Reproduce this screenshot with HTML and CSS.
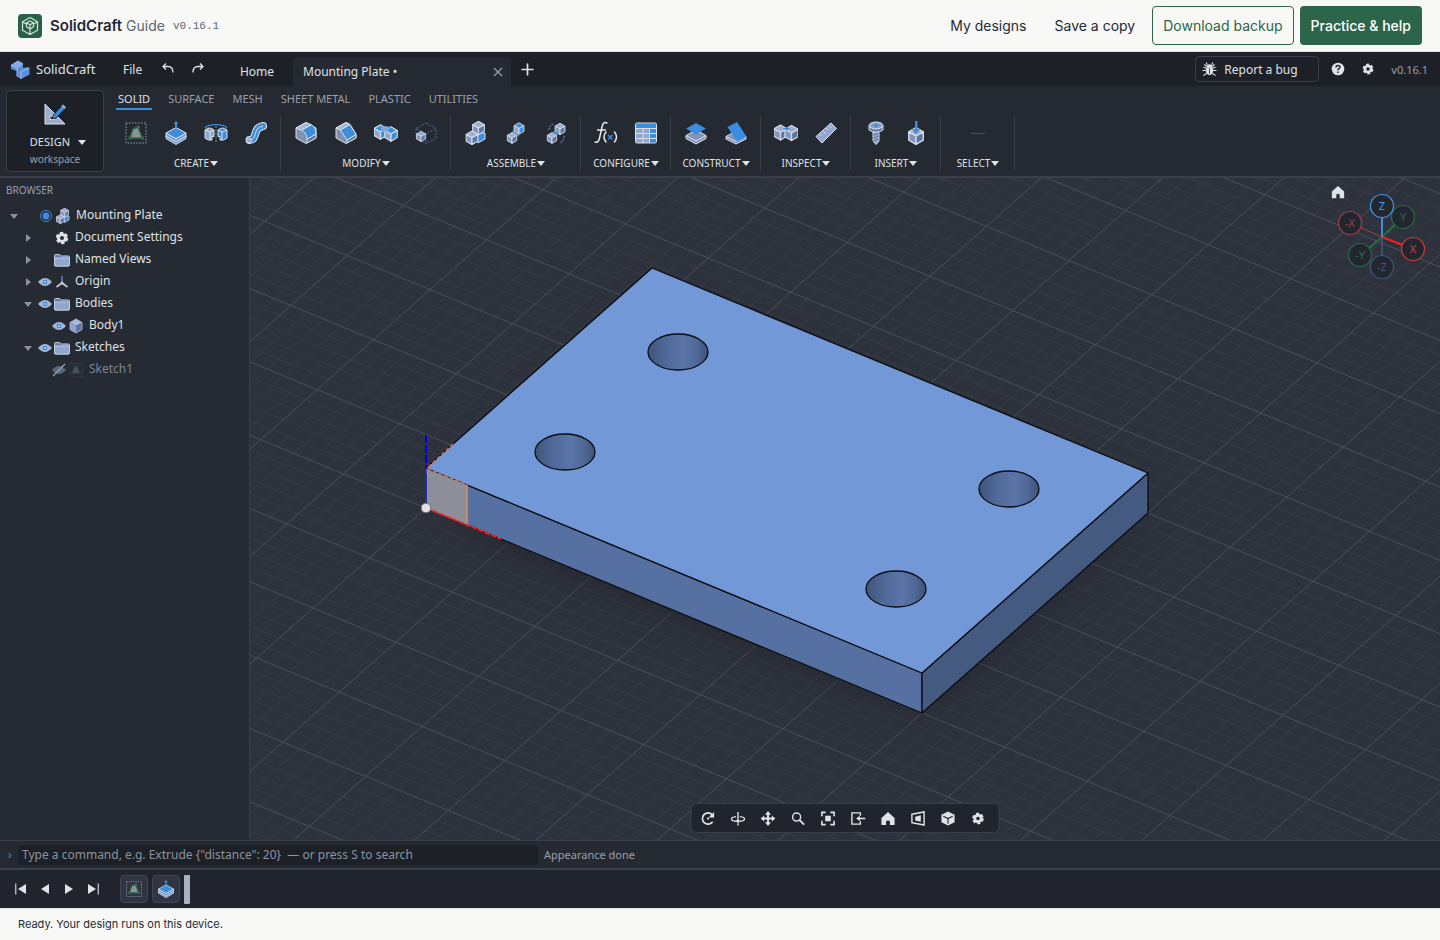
FILE: index.html
```html
<!DOCTYPE html>
<html lang="en">
<head>
<meta charset="utf-8">
<meta name="viewport" content="width=device-width, initial-scale=1">
<title>SolidCraft Guide</title>
<link rel="stylesheet" href="styles.css">
</head>
<body>
<svg class="sprite" aria-hidden="true">
  <defs>
    <g id="cube-grey" stroke="#d5dbe6" stroke-linejoin="round">
      <path d="M0-6 5.2-3 0 0-5.2-3Z" fill="#9dadcb"/><path d="M-5.2-3 0 0V6L-5.2 3Z" fill="#8095bf"/><path d="M5.2-3 0 0V6L5.2 3Z" fill="#5f76a5"/>
    </g>
    <g id="cube-blue" stroke="#d5dbe6" stroke-linejoin="round">
      <path d="M0-6 5.2-3 0 0-5.2-3Z" fill="#3b8ddd"/><path d="M-5.2-3 0 0V6L-5.2 3Z" fill="#8fa6cf"/><path d="M5.2-3 0 0V6L5.2 3Z" fill="#3b8ddd"/>
    </g>
    <symbol id="i-sketch" viewBox="0 0 24 24">
      <rect x="2" y="2" width="20" height="20" fill="none" stroke="#8fa0bd" stroke-dasharray="1.5 1.5"/>
      <path d="M6 17 9 8l5-2 4 11Z" fill="#8d9499" stroke="#2c6e49" stroke-width="1.4"/>
      <path d="M4.500 15.500h3v3h-3ZM17 15.500h3v3h-3ZM13 4.500h3v3h-3Z" fill="#2c6e49"/>
    </symbol>
    <symbol id="i-extrude" viewBox="0 0 24 24">
      <path d="M2 12v5.500l10 6 10-6V12L12 18Z" fill="#6f94cf" stroke="#dbe1ea"/>
      <path d="M12 6.500 22 12l-10 5.800L2 12Z" fill="#3b8ddd" stroke="#dbe1ea"/>
      <path d="M2 15l10 6 10-6" fill="none" stroke="#dbe1ea"/>
      <path d="M12 0l2.500 3h-1.500v4h-2V3H9.500Z" fill="#3b8ddd"/>
    </symbol>
    <symbol id="i-revolve" viewBox="0 0 24 24">
      <path d="M1 7c3-4.500 19-4.500 22 0" fill="none" stroke="#3b8ddd" stroke-width="1.300"/>
      <path d="M1 9q4.500-4 9 0v6.500H8V19q-4 1-7-2Z" fill="#8fa6cf" stroke="#dbe1ea"/>
      <path d="M23 9q-4.500-4-9 0v6.500h2V19q4 1 7-2Z" fill="#3b8ddd" stroke="#dbe1ea"/>
      <path d="M6 11v8M18 11v8M1 9l5 2 4-2M23 9l-5 2-4-2" stroke="#dbe1ea" fill="none"/>
      <path d="M12 5v17" stroke="#7e8ba3" stroke-dasharray="2 1.500"/>
    </symbol>
    <symbol id="i-sweep" viewBox="0 0 24 24">
      <path d="M5.500 19C14 19 8 7 19 5" fill="none" stroke="#dbe1ea" stroke-width="8" stroke-linecap="round"/>
      <path d="M5.500 19C14 19 8 7 19 5" fill="none" stroke="#3b8ddd" stroke-width="6" stroke-linecap="round"/>
      <path d="M5.500 19C14 19 8 7 19 5" fill="none" stroke="#dbe1ea"/>
      <ellipse cx="5" cy="19.500" rx="2.500" ry="2.300" fill="#8fa6cf" stroke="#dbe1ea"/>
    </symbol>
    <symbol id="i-fillet" viewBox="0 0 24 24">
      <path d="M12 1.500 22 7v10l-10 5.500L2 17V7Z" fill="#7f90b3" stroke="#dbe1ea"/>
      <path d="M12 1.500 17.500 3.800 7.500 9.200 2 7Z" fill="#a9b7d2" stroke="#dbe1ea"/>
      <path d="M13 22v-3.800l9-5.200v4Z" fill="#5e729c" stroke="#dbe1ea"/>
      <path d="M17.500 3.800q4.500 2.700 4.500 9.200L13 18.200q0-6-5.500-9Z" fill="#3b8ddd" stroke="#dbe1ea"/>
    </symbol>
    <symbol id="i-chamfer" viewBox="0 0 24 24">
      <path d="M12 1.500 16 3.500 22 13v4l-10 5.500L2 17V7Z" fill="#7f90b3" stroke="#dbe1ea"/>
      <path d="M12 1.500 16 3.500 6.500 9 2 7Z" fill="#a9b7d2" stroke="#dbe1ea"/>
      <path d="M13 22v-3l9-5.500V17Z" fill="#5e729c" stroke="#dbe1ea"/>
      <path d="M16 3.500 22 13.500 13 19 6.500 9Z" fill="#3b8ddd" stroke="#dbe1ea"/>
    </symbol>
    <symbol id="i-combine" viewBox="0 0 24 24">
      <use href="#cube-blue" transform="translate(6.500 11) scale(1.200)"/>
      <use href="#cube-blue" transform="translate(17 13) scale(1.200)"/>
      <path d="M7 4.500 17 6l-5 5-5-1Z" fill="#7fa6de"/>
    </symbol>
    <symbol id="i-shell" viewBox="0 0 24 24">
      <path d="M12 2 22 7.500v10L12 22.500 2 17.500v-10ZM2 7.500l10 5 10-5M12 12.500v10" fill="none" stroke="#4b659a" stroke-dasharray="2 1.200"/>
      <use href="#cube-grey" transform="translate(7 15.500) scale(.85)"/>
    </symbol>
    <symbol id="i-assemble" viewBox="0 0 24 24">
      <path d="M13 12h8v6l-7 4Z" fill="#3b8ddd" stroke="#dbe1ea"/>
      <use href="#cube-grey" transform="translate(14.500 7) scale(1.120)"/>
      <use href="#cube-grey" transform="translate(8 16.800) scale(1.120)"/>
    </symbol>
    <symbol id="i-joint" viewBox="0 0 24 24">
      <path d="M10 12l5 3M8 10.500l5 3" stroke="#3b8ddd" stroke-width="1.500"/>
      <use href="#cube-blue" transform="translate(15 7.500) scale(.95)"/>
      <use href="#cube-grey" transform="translate(8 17) scale(.9)"/>
    </symbol>
    <symbol id="i-joint2" viewBox="0 0 24 24">
      <path d="M5 9q0-5 5-6M20 15q1 4-4 7" fill="none" stroke="#5875a9" stroke-width="1.300" stroke-dasharray="2 1"/>
      <use href="#cube-grey" transform="translate(16 8) scale(.95)"/>
      <use href="#cube-grey" transform="translate(8 17) scale(.9)"/>
      <path d="M9 11l5 2" stroke="#3b8ddd" stroke-width="2"/>
    </symbol>
    <symbol id="i-fx" viewBox="0 0 24 24">
      <path d="M1 21c3 1 4-1 5-6l2-9c1-5 3-5 5-4M3.500 9h8" fill="none" stroke="#e4e8ec" stroke-width="1.500" stroke-linecap="round"/>
      <path d="M12 11q-4 5 0 10M20.500 11q4 5 0 10" fill="none" stroke="#e4e8ec" stroke-width="1.500" stroke-linecap="round"/>
      <path d="M14 14l4.500 4.500M18.500 14 14 18.500" stroke="#3b8ddd" stroke-width="1.500"/>
    </symbol>
    <symbol id="i-table" viewBox="0 0 24 24">
      <rect x="1.500" y="2" width="21" height="20" rx="1.500" fill="#8fa6cf" stroke="#dbe1ea"/>
      <path d="M2 2.500h20v5H2ZM16 8h6v13.500h-6Z" fill="#3b8ddd"/>
      <path d="M2 7.500h20M2 12.500h20M2 17.500h20M9 8v14M15.500 8v14" stroke="#dbe1ea"/>
    </symbol>
    <symbol id="i-plane" viewBox="0 0 24 24">
      <path d="M2 14.500v3l10 5.500 10-5.500v-3L12 9Z" fill="#8095bf" stroke="#dbe1ea"/>
      <path d="M2 14.500l10 5.500 10-5.500" fill="none" stroke="#dbe1ea"/>
      <path d="M12 2 22 7.500l-10 6-10-6Z" fill="#3b8ddd"/>
    </symbol>
    <symbol id="i-plane2" viewBox="0 0 24 24">
      <path d="M2 15.500v2.500l10 5 10-5v-2.500L12 10Z" fill="#8095bf" stroke="#dbe1ea"/>
      <path d="M2 15.500l10 5 10-5" fill="none" stroke="#dbe1ea"/>
      <path d="M3.500 6 13 1l9.500 14.500-9.500 5Z" fill="#3b8ddd"/>
    </symbol>
    <symbol id="i-interfere" viewBox="0 0 24 24">
      <use href="#cube-grey" transform="translate(6.500 11.500) scale(1.250)"/>
      <use href="#cube-grey" transform="translate(17.500 12) scale(1.250)"/>
      <path d="M9 7.500l4-1.500 3 1.500-3.500 2Z" fill="#3b8ddd"/>
    </symbol>
    <symbol id="i-ruler" viewBox="0 0 24 24">
      <path d="M2 15.500 17 2l5.500 5.500L8 22Z" fill="#8fa6cf" stroke="#dbe1ea"/>
      <path d="M5.500 13l2 2M9 10l3 3M12 7l2 2M15 4.500l3 3" stroke="#dbe1ea"/>
    </symbol>
    <symbol id="i-screw" viewBox="0 0 24 24">
      <path d="M9 9h6v11l-3 3.500L9 20Z" fill="#8fa6cf" stroke="#dbe1ea"/>
      <path d="M9 14l6-2M9 17l6-2M9 20l6-2" stroke="#5e729c"/>
      <path d="M5 5v4q7 4.500 14 0V5Z" fill="#5e76a5" stroke="#dbe1ea"/>
      <ellipse cx="12" cy="4.500" rx="7" ry="3.500" fill="#8fa6cf" stroke="#dbe1ea"/>
      <path d="M12 2v5M8.500 4.500h7" stroke="#3b8ddd" stroke-width="1.500"/>
    </symbol>
    <symbol id="i-insert" viewBox="0 0 24 24">
      <use href="#cube-grey" transform="translate(12 15) scale(1.400)"/>
      <path d="M11 0h2.500v8H16l-4 5-4-5h3Z" fill="#3b8ddd"/>
    </symbol>
    <symbol id="i-design" viewBox="0 0 24 24">
      <path d="M2 2v20h20ZM7 13l4.500 4.500H7Z" fill="#9dadcb" stroke="#dbe1ea" fill-rule="evenodd"/>
      <path d="M10.500 13 20 2.500l3 3L13 16l-4 1Z" fill="#3b8ddd" stroke="#252931"/>
      <path d="M18.500 4l3 3L23 5.500l-3-3Z" fill="#9dadcb"/>
    </symbol>
    <symbol id="i-gear" viewBox="-1 -1 18 18">
      <circle cx="8" cy="8" r="3.900" fill="none" stroke="currentColor" stroke-width="3.400"/>
      <circle cx="8" cy="8" r="5.500" fill="none" stroke="currentColor" stroke-width="3" stroke-dasharray="3.460 2.300"/>
    </symbol>
    <symbol id="i-home" viewBox="0 0 16 16"><path d="M8 1 1 7.500V15H6v-4q2-2 4 0v4h5V7.500Z" fill="currentColor"/></symbol>
    <symbol id="i-folder" viewBox="0 0 16 16">
      <path d="M.5 3.500q0-1 1-1h4l1.500 1.500h7.500q1 0 1 1V13q0 1-1 1h-13q-1 0-1-1Z" fill="#5f7db5" stroke="#c4cbd6"/>
      <path d="M.5 6h15v7q0 1-1 1h-13q-1 0-1-1Z" fill="#8fa6cf" stroke="#c4cbd6"/>
    </symbol>
    <symbol id="i-eye" viewBox="0 0 16 16">
      <path d="M1 8q7-8 14 0-7 8-14 0Z" fill="#a3b6d6"/><circle cx="8" cy="8" r="2.200" fill="#2f7fd4"/><circle cx="8" cy="8" r="1" fill="#dbe6f5"/>
    </symbol>
    <symbol id="i-hidden" viewBox="0 0 16 16">
      <path d="M1 8q7-8 14 0-7 8-14 0Z" fill="#596880"/><path d="M2 14 14 2" stroke="#9aa3b1" stroke-width="1.300"/>
    </symbol>
    <symbol id="i-origin" viewBox="0 0 16 16">
      <path d="M8 2v7" stroke="#5f84c4" stroke-width="1.500"/><path d="M8 9 2.500 13M8 9l5.500 4" stroke="#c4cbd6" stroke-width="1.600"/><circle cx="8" cy="9" r="1.600" fill="#c4cbd6"/>
    </symbol>
    <symbol id="i-body" viewBox="-8 -8 16 16">
      <path d="M0-7 6-3.500 0 0-6-3.500Z" fill="#a9bbdc"/><path d="M-6-3.500 0 0V7L-6 3.500Z" fill="#8fa6cf"/><path d="M6-3.500 0 0V7L6 3.500Z" fill="#5f76a5"/>
      <path d="M0-7 6-3.500V3.500L0 7-6 3.500V-3.500Z" fill="none" stroke="#b4c0d6" stroke-width=".8"/>
    </symbol>
  </defs>
</svg>

<header class="site-header">
  <svg class="site-logo" viewBox="0 0 24 24" aria-hidden="true">
    <rect width="24" height="24" rx="4" fill="#2a6146"/>
    <path d="M12 3.500 19.500 7.800v8.400L12 20.500l-7.500-4.300V7.800ZM12 20.500V15M4.500 7.800 9 10.500M19.500 7.800 15 10.500M8.500 8.800 12 7l3.500 1.800v4L12 15l-3.500-2.200ZM8.500 8.800 12 10.800l3.500-2M12 10.800V15" fill="none" stroke="#cfe3d6" stroke-width="1.200" stroke-linejoin="round"/>
  </svg>
  <span class="site-name"><strong>SolidCraft</strong> <span>Guide</span></span>
  <span class="site-version">v0.16.1</span>
  <nav class="site-nav">
    <button class="nav-btn">My designs</button>
    <button class="nav-btn">Save a copy</button>
    <button class="nav-btn outlined">Download backup</button>
    <button class="nav-btn filled">Practice &amp; help</button>
  </nav>
</header>

<main class="app">
  <div class="titlebar">
    <svg class="app-logo" viewBox="0 0 20 20" aria-hidden="true">
      <path d="M1 6 8 1.500l5 3V9l5-1 1.500 1.500v6L11 20l-4-2.500V12L1 10Z" fill="#5b8fdc"/>
      <path d="M1 6l6 3v8.500M7 9l6-4.500M11 12.500l8.500-3.500M11 12.500V20" fill="none" stroke="#9dbbe8"/>
      <path d="M1 6 8 1.500l5 3L7 9Z" fill="#88abe2"/>
    </svg>
    <span class="app-name">SolidCraft</span>
    <button class="file-btn">File</button>
    <button class="mini-btn" aria-label="Undo"><svg viewBox="0 0 14 14"><path d="M5 1.500 2 4.500l3 3M2 4.500h5q5 0 5 6" fill="none" stroke="currentColor" stroke-width="1.300"/></svg></button>
    <button class="mini-btn" aria-label="Redo"><svg viewBox="0 0 14 14"><path d="M9 1.500l3 3-3 3M12 4.500H7q-5 0-5 6" fill="none" stroke="currentColor" stroke-width="1.300"/></svg></button>
    <button class="home-tab">Home</button>
    <div class="doc-tab"><span>Mounting Plate •</span><button class="close" aria-label="Close tab"><svg viewBox="0 0 10 10"><path d="M1 1l8 8M9 1 1 9" stroke="currentColor" stroke-width="1.200"/></svg></button></div>
    <button class="new-tab" aria-label="New tab"><svg viewBox="0 0 14 14"><path d="M7 .5v13M.5 7h13" stroke="currentColor" stroke-width="1.800"/></svg></button>
    <div class="title-right">
      <button class="bug-btn"><svg viewBox="0 0 16 16" aria-hidden="true"><ellipse cx="8" cy="9" rx="3.800" ry="5" fill="currentColor"/><path d="M5 4.500q3-3 6 0ZM5 5 2.500 2.500M11 5l2.500-2.500M4.500 9H.5M11.500 9h4M5 12l-3.500 2.500M11 12l3.500 2.500M5 7 1.500 5.500M11 7l3.500-1.500M5.500 3 4.500.5M10.500 3l1-2.500" fill="currentColor" stroke="currentColor" stroke-width="1.200"/><path d="M8 6v7" stroke="#1d2027" stroke-width=".8"/></svg>Report a bug</button>
      <button class="round-btn" aria-label="Help"><svg viewBox="0 0 14 14"><circle cx="7" cy="7" r="6.300" fill="currentColor"/><path d="M5 5.500q0-2 2-2t2 1.800Q9 6.500 7 7.300v1M7 9.500v1.400" fill="none" stroke="#1d2027" stroke-width="1.400"/></svg></button>
      <button class="round-btn" aria-label="Settings"><svg><use href="#i-gear"/></svg></button>
      <span class="app-version">v0.16.1</span>
    </div>
  </div>

  <div class="ribbon">
    <button class="workspace"><svg><use href="#i-design"/></svg><span class="ws-name">DESIGN <i class="tri"></i></span><span class="ws-sub">workspace</span></button>
    <div class="ribbon-main">
      <div class="ribbon-tabs">
        <button class="active">SOLID</button><button>SURFACE</button><button>MESH</button><button>SHEET METAL</button><button>PLASTIC</button><button>UTILITIES</button>
      </div>
      <div class="groups">
        <div class="group"><div class="tools"><button aria-label="Sketch"><svg><use href="#i-sketch"/></svg></button><button aria-label="Extrude"><svg><use href="#i-extrude"/></svg></button><button aria-label="Revolve"><svg><use href="#i-revolve"/></svg></button><button aria-label="Sweep"><svg><use href="#i-sweep"/></svg></button></div><button class="group-name">CREATE<i class="tri"></i></button></div>
        <div class="group"><div class="tools"><button aria-label="Fillet"><svg><use href="#i-fillet"/></svg></button><button aria-label="Chamfer"><svg><use href="#i-chamfer"/></svg></button><button aria-label="Combine"><svg><use href="#i-combine"/></svg></button><button aria-label="Scale"><svg><use href="#i-shell"/></svg></button></div><button class="group-name">MODIFY<i class="tri"></i></button></div>
        <div class="group"><div class="tools"><button aria-label="Component"><svg><use href="#i-assemble"/></svg></button><button aria-label="Joint"><svg><use href="#i-joint"/></svg></button><button aria-label="As-built joint"><svg><use href="#i-joint2"/></svg></button></div><button class="group-name">ASSEMBLE<i class="tri"></i></button></div>
        <div class="group"><div class="tools"><button aria-label="Parameters"><svg><use href="#i-fx"/></svg></button><button aria-label="Table"><svg><use href="#i-table"/></svg></button></div><button class="group-name">CONFIGURE<i class="tri"></i></button></div>
        <div class="group"><div class="tools"><button aria-label="Offset plane"><svg><use href="#i-plane"/></svg></button><button aria-label="Angled plane"><svg><use href="#i-plane2"/></svg></button></div><button class="group-name">CONSTRUCT<i class="tri"></i></button></div>
        <div class="group"><div class="tools"><button aria-label="Interference"><svg><use href="#i-interfere"/></svg></button><button aria-label="Measure"><svg><use href="#i-ruler"/></svg></button></div><button class="group-name">INSPECT<i class="tri"></i></button></div>
        <div class="group"><div class="tools"><button aria-label="Fastener"><svg><use href="#i-screw"/></svg></button><button aria-label="Insert part"><svg><use href="#i-insert"/></svg></button></div><button class="group-name">INSERT<i class="tri"></i></button></div>
        <div class="group select"><div class="tools"><span class="none"></span></div><button class="group-name">SELECT<i class="tri"></i></button></div>
      </div>
    </div>
  </div>

  <div class="workarea">
    <aside class="browser">
      <h2>BROWSER</h2>
      <ul class="tree">
        <li class="row"><i class="tw open"></i><i class="gap"></i><input type="radio" name="active" checked aria-label="Activate Mounting Plate"><svg><use href="#i-assemble"/></svg><span>Mounting Plate</span></li>
        <li class="row l1"><i class="tw"></i><i class="slot"></i><svg><use href="#i-gear"/></svg><span>Document Settings</span></li>
        <li class="row l1"><i class="tw"></i><i class="slot"></i><svg><use href="#i-folder"/></svg><span>Named Views</span></li>
        <li class="row l1"><i class="tw"></i><svg><use href="#i-eye"/></svg><svg><use href="#i-origin"/></svg><span>Origin</span></li>
        <li class="row l1"><i class="tw open"></i><svg><use href="#i-eye"/></svg><svg><use href="#i-folder"/></svg><span>Bodies</span></li>
        <li class="row l2"><i class="slot"></i><svg><use href="#i-eye"/></svg><svg><use href="#i-body"/></svg><span>Body1</span></li>
        <li class="row l1"><i class="tw open"></i><svg><use href="#i-eye"/></svg><svg><use href="#i-folder"/></svg><span>Sketches</span></li>
        <li class="row l2 off"><i class="slot"></i><svg><use href="#i-hidden"/></svg><svg class="faint"><use href="#i-sketch"/></svg><span>Sketch1</span></li>
      </ul>
    </aside>

    <section class="viewport" aria-label="3D view">
      <svg class="scene" viewBox="0 0 1190 662" preserveAspectRatio="xMidYMid slice">
        <defs>
          <linearGradient id="bore"><stop offset="0" stop-color="#40547a"/><stop offset=".3" stop-color="#506998"/><stop offset=".6" stop-color="#5a75a7"/><stop offset=".8" stop-color="#506998"/><stop offset="1" stop-color="#3f5379"/></linearGradient>
          <filter id="soft" x="-20%" y="-20%" width="140%" height="140%" color-interpolation-filters="sRGB"><feGaussianBlur stdDeviation="26"/></filter>
        </defs>
        <g transform="matrix(4.133 1.708 2.822 -2.500 176 330)" fill="none">
          <path id="grid-minor" class="minor"/>
          <path id="grid-major" class="major"/>
        </g>
        <path d="M196 330 402 145 878 335 672 520Z" fill="#191b1f" opacity=".85" filter="url(#soft)"/>
        <g stroke="#0b0d11" stroke-width="1.300" stroke-linejoin="round">
          <path d="M176 290 672 495V535L176 330Z" fill="#5671a1"/>
          <path d="M898 295 672 495V535L898 335Z" fill="#455a80"/>
          <path d="M176 290 402 90 898 295 672 495Z" fill="#7398d7"/>
          <g fill="url(#bore)">
            <ellipse cx="428" cy="174" rx="30" ry="18"/><ellipse cx="315" cy="274" rx="30" ry="18"/>
            <ellipse cx="759" cy="311" rx="30" ry="18"/><ellipse cx="646" cy="411" rx="30" ry="18"/>
          </g>
        </g>
        <path d="M177 291 217 307V347L177 331Z" fill="#8c8f98"/>
        <path d="M177 297V291M217 307V347" fill="none" stroke="#d18b63" stroke-width="1.600"/>
        <path d="M203 266 177 290l40 17" fill="none" stroke="#d1714f" stroke-width="1.300" stroke-dasharray="4 2"/>
        <path d="M176 330 251 361" stroke="#f3201f" stroke-width="1.800" stroke-dasharray="6 1"/>
        <path d="M176 257V290" stroke="#0000f0" stroke-width="2" stroke-dasharray="8 2"/>
        <path d="M176 290V330" stroke="#1b35d8" stroke-width="1.500"/>
        <circle cx="176" cy="330" r="4.800" fill="#e0e4e6" stroke="#6d7178"/>
      </svg>

      <button class="view-home" aria-label="Home view"><svg><use href="#i-home"/></svg></button>
      <svg class="gizmo" viewBox="0 0 90 90" aria-label="Axis gizmo">
        <path d="M46 46 14 32" stroke="#9c4246"/><path d="M46 46V76" stroke="#4a6193" stroke-width="1.200"/>
        <path d="M46 46 24 65M46 46 67 26" stroke="#2a6b47" stroke-width="2.200"/>
        <path d="M46 46V16" stroke="#3b8ddd" stroke-width="2"/><path d="M46 46 77 58" stroke="#f3201f" stroke-width="2"/>
        <g class="balls">
          <g color="#2a6b47"><circle cx="67" cy="26" r="11.500"/><text x="67" y="30">Y</text><circle cx="24" cy="64" r="11.500"/><text x="24" y="68">-Y</text></g>
          <g color="#9c4246"><circle cx="14" cy="32" r="11.500"/><text x="14" y="36">-X</text></g>
          <g color="#41557f"><circle cx="46" cy="76" r="11.500"/><text x="46" y="80">-Z</text></g>
          <g color="#4797e6"><circle cx="46" cy="15" r="11.500"/><text x="46" y="19">Z</text></g>
          <g color="#d63a3a"><circle cx="77" cy="58" r="11.500"/><text x="77" y="62">X</text></g>
        </g>
      </svg>

      <div class="viewbar">
        <button aria-label="Orbit"><svg viewBox="0 0 16 16"><path d="M13 11.500A6 6 0 1 1 12.500 4" fill="none" stroke="currentColor" stroke-width="1.800"/><path d="M14.500 1v6h-6Z" fill="currentColor"/><circle cx="8" cy="8" r="1.200" fill="currentColor"/></svg></button>
        <button aria-label="Turntable"><svg viewBox="0 0 16 16"><path d="M8 1v10M8 13v2.500M10 6q5 .5 5 2.500 0 2.500-7 2.500T1 8.500q0-2 5-2.500" fill="none" stroke="currentColor" stroke-width="1.500"/><path d="M5 11l4-2v4Z" fill="currentColor"/></svg></button>
        <button aria-label="Pan"><svg viewBox="0 0 16 16"><path d="M8 2v12M2 8h12" stroke="currentColor" stroke-width="2.200"/><path d="M8 0l3.200 4H4.800ZM8 16l3.200-4H4.800ZM0 8l4-3.200v6.400ZM16 8l-4-3.200v6.400Z" fill="currentColor"/></svg></button>
        <button aria-label="Zoom"><svg viewBox="0 0 16 16"><circle cx="6.500" cy="6.500" r="4.300" fill="none" stroke="currentColor" stroke-width="1.500"/><path d="M9.500 9.500l5 5" stroke="currentColor" stroke-width="2"/></svg></button>
        <button aria-label="Fit"><svg viewBox="0 0 16 16"><path d="M1.500 5.500v-4h4M10.500 1.500h4v4M14.500 10.500v4h-4M5.500 14.500h-4v-4" fill="none" stroke="currentColor" stroke-width="1.700"/><path d="M5 5h6v6H5Z" fill="currentColor"/></svg></button>
        <button aria-label="Look at"><svg viewBox="0 0 16 16"><path d="M10.500 5V2h-9v12h9v-3" fill="none" stroke="currentColor" stroke-width="1.500"/><path d="M16 8H8" stroke="currentColor" stroke-width="1.500"/><path d="M6 8l4-3v6Z" fill="currentColor"/></svg></button>
        <button aria-label="Home"><svg><use href="#i-home"/></svg></button>
        <button aria-label="Perspective"><svg viewBox="0 0 16 16"><path d="M1.500 3.500 14.500 1v14L1.500 12.500Z" fill="none" stroke="currentColor" stroke-width="1.500"/><path d="M5 6l6-1.500v7L5 10Z" fill="currentColor"/></svg></button>
        <button aria-label="Display style"><svg viewBox="0 0 16 16"><path d="M8 .5 15 4v8l-7 3.500L1 12V4Z" fill="currentColor"/><path d="M3 5.500l5 2.500 5-2.500M8 8v5.500" fill="none" stroke="#21242c" stroke-width="1.200"/></svg></button>
        <button aria-label="View settings"><svg><use href="#i-gear"/></svg></button>
      </div>
    </section>
  </div>

  <div class="command">
    <label for="cmd">›</label>
    <input id="cmd" type="text" placeholder="Type a command, e.g. Extrude {&quot;distance&quot;: 20}  — or press S to search">
    <span class="status">Appearance done</span>
  </div>

  <div class="timeline">
    <button aria-label="First"><svg viewBox="0 0 14 14"><path d="M1.700 1.500v11" stroke="#aab2c0" stroke-width="1.500"/><path d="M12 2v10L4 7Z" fill="currentColor"/></svg></button>
    <button aria-label="Previous"><svg viewBox="0 0 14 14"><path d="M11 2v10L3 7Z" fill="currentColor"/></svg></button>
    <button aria-label="Next"><svg viewBox="0 0 14 14"><path d="M3 2v10l8-5Z" fill="currentColor"/></svg></button>
    <button aria-label="Last"><svg viewBox="0 0 14 14"><path d="M12.300 1.500v11" stroke="#aab2c0" stroke-width="1.500"/><path d="M2 2v10l8-5Z" fill="currentColor"/></svg></button>
    <div class="features"><button aria-label="Sketch1"><svg><use href="#i-sketch"/></svg></button><button aria-label="Extrude1"><svg><use href="#i-extrude"/></svg></button><i class="marker"></i></div>
  </div>
</main>
<footer class="site-footer">Ready. Your design runs on this device.</footer>
<script src="grid.js"></script>
</body>
</html>
```
FILE: styles.css
```css
* { box-sizing: border-box; }
body { margin: 0; height: 100vh; display: flex; flex-direction: column; overflow: hidden; background: #f8f8f6; color: #1f2a37; font-family: Inter, sans-serif; }
button { font: inherit; color: inherit; background: none; border: 0; padding: 0; margin: 0; cursor: pointer; }
svg { display: block; flex: none; }
.sprite { position: absolute; width: 0; height: 0; }

.site-header { display: flex; align-items: center; height: 52px; padding: 0 18px; border-bottom: 1px solid #dce3dd; flex: none; }
.site-logo { width: 24px; height: 24px; margin-right: 8px; }
.site-name { font-size: 14px; color: #5b6673; }
.site-name strong { font-size: 15px; font-weight: 600; color: #1f2733; }
.site-version { margin-left: 8px; font: 11px "Liberation Mono", monospace; color: #5b6673; }
.site-nav { display: flex; gap: 6px; margin-left: auto; }
.nav-btn { height: 39px; padding: 0 10px; border: 1px solid transparent; border-radius: 4px; font-size: 14px; white-space: nowrap; }
.nav-btn.outlined { color: #2c6549; border-color: #2c6549; }
.nav-btn.filled { color: #fff; background: #2c6549; font-weight: 500; }

.app { flex: 1; min-height: 0; display: flex; flex-direction: column; font-family: "Noto Sans", sans-serif; font-size: 12px; color: #dfe2e7; background: #252931; }

.titlebar { display: flex; align-items: center; height: 34px; padding: 0 12px 0 10px; background: #1d2027; flex: none; }
.app-logo { width: 20px; height: 20px; margin-right: 6px; }
.app-name { font-size: 13px; width: 87px; }
.file-btn { width: 30px; text-align: left; margin-right: 8px; }
.mini-btn { width: 14px; margin-right: 16px; }
.mini-btn svg { width: 14px; height: 14px; }
.home-tab { align-self: flex-end; height: 29px; width: 72px; }
.doc-tab { align-self: flex-end; display: flex; align-items: center; justify-content: space-between; width: 218px; height: 29px; padding: 0 8px 0 10px; border-radius: 4px 4px 0 0; background: #252931; }
.close { color: #9aa0ab; }
.close svg { width: 10px; height: 10px; }
.new-tab { margin-left: 10px; }
.new-tab svg { width: 13px; height: 13px; }
.title-right { display: flex; align-items: center; margin-left: auto; }
.bug-btn { display: flex; align-items: center; gap: 7px; width: 124px; height: 26px; padding-left: 6px; border: 1px solid #3a3f4b; border-radius: 4px; margin-right: 12px; }
.bug-btn svg { width: 15px; height: 15px; }
.round-btn { margin-right: 16px; }
.round-btn svg { width: 14px; height: 14px; }
.app-version { font-size: 11px; color: #9aa0ab; }

.ribbon { display: flex; height: 92px; border-bottom: 2px solid #3a3f4b; flex: none; }
.workspace { display: flex; flex-direction: column; align-items: center; width: 98px; height: 82px; margin: 4px 7px 0 6px; padding-top: 11px; border: 1px solid #3a3f4b; border-radius: 4px; background: #1d2027; }
.workspace svg { width: 24px; height: 24px; }
.ws-name { display: flex; align-items: center; gap: 8px; margin-top: 8px; padding-left: 6px; font-size: 11px; line-height: 16px; }
.ws-sub { margin-top: 2px; font-size: 10px; line-height: 14px; color: #9aa0ab; }
.tri { border: 4px solid transparent; border-top: 5px solid #dfe2e7; border-bottom: 0; }
.ribbon-tabs { display: flex; gap: 14px; height: 24px; padding: 3px 0 0 5px; font-size: 11px; color: #9aa0ab; }
.ribbon-tabs button { padding: 0 2px; border-bottom: 2px solid transparent; }
.ribbon-tabs .active { color: #dfe2e7; border-color: #3b8ddd; }
.groups { display: flex; padding-top: 6px; }
.group { display: flex; flex-direction: column; align-items: center; height: 54px; padding: 0 4px 0 5px; border-right: 1px solid #3a3f4b; }
.tools { display: flex; flex: none; height: 34px; align-items: center; }
.tools button { width: 40px; display: grid; place-items: center; }
.tools svg { width: 24px; height: 24px; }
.group.select { width: 74px; }
.none { width: 14px; height: 1px; background: #4a4f5a; }
.group-name { display: flex; flex: none; align-items: center; gap: 1px; height: 26px; font-size: 10px; white-space: nowrap; }

.workarea { flex: 1; min-height: 0; display: flex; }
.browser { width: 250px; border-right: 1px solid #3a3f4b; background: #262a32; flex: none; }
.browser h2 { margin: 0; padding: 4px 6px 0; font-size: 10px; line-height: 16px; font-weight: 400; color: #9aa0ab; }
.tree { list-style: none; margin: 7px 0 0; padding: 0; }
.row { display: flex; align-items: center; gap: 1px; height: 22px; padding-left: 6px; }
.row.l1 { padding-left: 20px; }
.row.l2 { padding-left: 34px; }
.row svg { width: 16px; height: 16px; }
.row span { margin-left: 4px; line-height: 16px; padding-bottom: 2px; }
.row.off { color: #7d838e; }
.faint { opacity: .35; }
.slot { width: 16px; }
.gap { width: 14px; }
.tw { width: 16px; display: grid; place-items: center; }
.tw::before { content: ""; border: 4px solid transparent; border-left: 5px solid #8d939e; border-right: 0; }
.tw.open::before { border: 4px solid transparent; border-top: 5px solid #8d939e; border-bottom: 0; }
.row input { appearance: none; width: 12px; height: 12px; margin: 0 2px; border: 1px solid #3b8ddd; border-radius: 50%; background: radial-gradient(#3b8ddd 0 3px, transparent 4px); }

.viewport { position: relative; flex: 1; min-width: 0; background: #2e323d; overflow: hidden; }
.scene { width: 100%; height: 100%; }
.minor, .major { vector-effect: non-scaling-stroke; stroke-width: 1px; }
.minor { stroke: #363b46; }
.major { stroke: #4b505b; }
.view-home { position: absolute; top: 7px; right: 95px; }
.view-home svg { width: 14px; height: 14px; }
.gizmo { position: absolute; top: 13px; right: 14px; width: 90px; height: 90px; }
.balls circle { fill: #22262e; stroke: currentColor; stroke-width: 1.2px; }
.balls text { fill: currentColor; font-size: 11px; text-anchor: middle; }
.viewbar { position: absolute; bottom: 7px; left: 50%; transform: translateX(-50%); display: flex; gap: 2px; padding: 0 7px 0 2px; border: 1px solid #3a3f4b; border-radius: 6px; background: #21242c; }
.viewbar button { display: grid; place-items: center; width: 28px; height: 28px; }
.viewbar svg { width: 15px; height: 15px; }

.command { display: flex; align-items: center; height: 30px; border-top: 1px solid #3a3f4b; border-bottom: 2px solid #3a3f4b; flex: none; }
.command label { width: 18px; padding-left: 8px; color: #3b8ddd; }
.command input { width: 520px; height: 20px; padding: 0 4px; border: 0; border-radius: 3px; background: #1d2027; color: inherit; font: inherit; }
.command input::placeholder { color: #8d939e; opacity: 1; white-space: pre; }
.status { margin-left: 6px; font-size: 11px; color: #9aa0ab; }

.timeline { display: flex; align-items: center; gap: 10px; height: 38px; padding-left: 14px; background: #21242c; flex: none; }
.timeline > button svg { width: 14px; height: 14px; }
.features { display: flex; gap: 4px; margin-left: 10px; }
.features button { display: grid; place-items: center; width: 28px; height: 28px; border: 1px solid #414654; border-radius: 4px; background: #303541; }
.features svg { width: 18px; height: 18px; }
.marker { width: 6px; height: 29px; border-radius: 1px; background: #a9b0bf; }

.site-footer { height: 32px; padding: 0 18px; border-top: 1px solid #dce3dd; font-size: 11px; line-height: 31px; flex: none; }
```
FILE: grid.js
```js
// Ground grid: a heavy line every 20 mm, a light one every 4 mm.
const extent = 400;
function lines(step, skip) {
  let d = "";
  for (let v = -extent; v <= extent; v += step) {
    if (skip && v % skip === 0) continue;
    d += `M${v} ${-extent}V${extent}M${-extent} ${v}H${extent}`;
  }
  return d;
}
document.getElementById("grid-minor").setAttribute("d", lines(4, 20));
document.getElementById("grid-major").setAttribute("d", lines(20));
```
